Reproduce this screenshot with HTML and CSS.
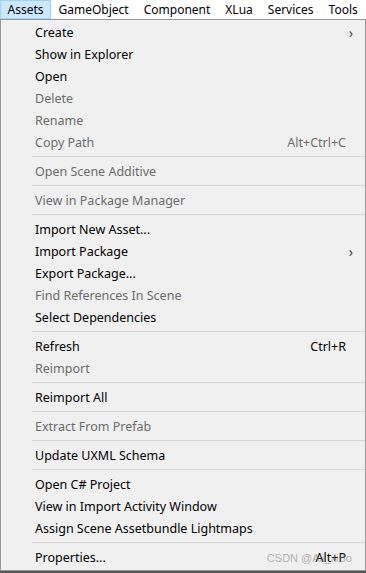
FILE: index.html
```html
<!DOCTYPE html>
<html lang="en">
<head>
    <meta charset="UTF-8">
    <title>Assets Menu</title>
    <link rel="stylesheet" href="styles.css">
</head>
<body>

    <!-- Menu bar -->
    <div class="menubar">
        <span class="menubar-item open">Assets</span>
        <span class="menubar-item">GameObject</span>
        <span class="menubar-item">Component</span>
        <span class="menubar-item">XLua</span>
        <span class="menubar-item">Services</span>
        <span class="menubar-item">Tools</span>
    </div>

    <!-- Dropdown -->
    <div class="dropdown">
        <div class="item">Create<span class="arrow">&#8250;</span></div>
        <div class="item">Show in Explorer</div>
        <div class="item">Open</div>
        <div class="item disabled">Delete</div>
        <div class="item disabled">Rename</div>
        <div class="item disabled">Copy Path<span class="shortcut">Alt+Ctrl+C</span></div>
        <div class="separator"></div>
        <div class="item disabled">Open Scene Additive</div>
        <div class="separator"></div>
        <div class="item disabled">View in Package Manager</div>
        <div class="separator"></div>
        <div class="item">Import New Asset...</div>
        <div class="item">Import Package<span class="arrow">&#8250;</span></div>
        <div class="item">Export Package...</div>
        <div class="item disabled">Find References In Scene</div>
        <div class="item">Select Dependencies</div>
        <div class="separator"></div>
        <div class="item">Refresh<span class="shortcut">Ctrl+R</span></div>
        <div class="item disabled">Reimport</div>
        <div class="separator"></div>
        <div class="item">Reimport All</div>
        <div class="separator"></div>
        <div class="item disabled">Extract From Prefab</div>
        <div class="separator"></div>
        <div class="item">Update UXML Schema</div>
        <div class="separator"></div>
        <div class="item">Open C# Project</div>
        <div class="item">View in Import Activity Window</div>
        <div class="item">Assign Scene Assetbundle Lightmaps</div>
        <div class="separator"></div>
        <div class="item">Properties...<span class="shortcut">Alt+P</span></div>

        <!-- watermark over the last row -->
        <span class="watermark">CSDN @Ali_xiBo</span>
    </div>

    <div class="below"></div>

</body>
</html>
```

FILE: styles.css
```css
body {
    margin: 0;
    padding: 0;
    background-color: #fff;
    font-family: "Noto Sans", "Noto Sans CJK SC", sans-serif;
    font-size: 12.5px;
    color: #000;
    width: 366px;
    overflow: hidden;
}

.menubar {
    display: flex;
    height: 19px;
    background-color: #fff;
    font-size: 12px;
}

.menubar-item {
    display: flex;
    align-items: center;
    padding: 0 6.5px;
    box-sizing: border-box;
    height: 19px;
    border: 1px solid transparent;
}

.menubar-item.open {
    background-color: #cce8ff;
    border-color: #99d1ff;
}

.dropdown {
    position: relative;
    box-sizing: border-box;
    width: 366px;
    height: 552px;
    background-color: #f0f0f0;
    border: 1px solid #979797;
    padding: 1px 0 2px 2px;
}

.item {
    display: flex;
    align-items: center;
    height: 22px;
    padding-left: 32px;
    padding-right: 19px;
}

.item.disabled {
    color: #6d6d6d;
}

.shortcut {
    margin-left: auto;
}

.arrow {
    margin-left: auto;
    margin-right: -7px;
    font-size: 14px;
    color: #444;
}

.separator {
    height: 1px;
    margin: 3px 0 3px 29px;
    background-color: #d7d7d7;
}

.watermark {
    position: absolute;
    right: 13px;
    bottom: 6px;
    font-family: "Liberation Sans", sans-serif;
    font-size: 11px;
    color: rgba(120, 120, 120, 0.55);
}

.below {
    height: 3px;
    background-color: #555;
}
```
